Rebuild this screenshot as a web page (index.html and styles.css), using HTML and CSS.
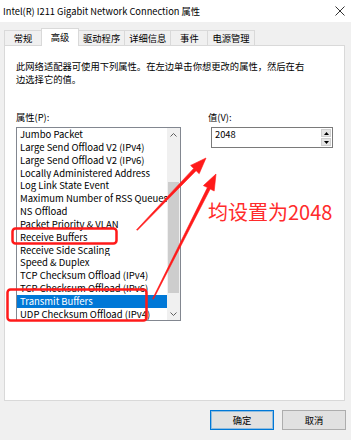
FILE: index.html
```html
<!DOCTYPE html>
<html lang="zh-CN">
<head>
    <meta charset="UTF-8">
    <meta name="viewport" content="width=device-width, initial-scale=1.0">
    <title>Intel(R) I211 Gigabit Network Connection 属性</title>
    <link rel="stylesheet" href="styles.css">
</head>
<body>
    <div class="window">
        <div class="titlebar">
            <span class="title">Intel(R) I211 Gigabit Network Connection 属性</span>
            <svg class="close" width="10" height="10" viewBox="0 0 10 10">
                <path d="M0.5 0.5L9.5 9.5M9.5 0.5L0.5 9.5" stroke="#333" stroke-width="1" fill="none"/>
            </svg>
        </div>

        <div class="tabs">
            <div class="tab">常规</div>
            <div class="tab active">高级</div>
            <div class="tab">驱动程序</div>
            <div class="tab">详细信息</div>
            <div class="tab">事件</div>
            <div class="tab">电源管理</div>
        </div>

        <div class="panel">
            <p class="desc">此网络适配器可使用下列属性。在左边单击你想更改的属性，然后在右<br>边选择它的值。</p>

            <div class="columns">
                <div class="col">
                    <div class="label">属性(P):</div>
                    <div class="listbox">
                        <ul class="items">
                            <li>Jumbo Packet</li>
                            <li>Large Send Offload V2 (IPv4)</li>
                            <li>Large Send Offload V2 (IPv6)</li>
                            <li>Locally Administered Address</li>
                            <li>Log Link State Event</li>
                            <li>Maximum Number of RSS Queues</li>
                            <li>NS Offload</li>
                            <li>Packet Priority &amp; VLAN</li>
                            <li>Receive Buffers</li>
                            <li>Receive Side Scaling</li>
                            <li>Speed &amp; Duplex</li>
                            <li>TCP Checksum Offload (IPv4)</li>
                            <li>TCP Checksum Offload (IPv6)</li>
                            <li class="selected">Transmit Buffers</li>
                            <li>UDP Checksum Offload (IPv4)</li>
                        </ul>
                        <div class="scrollbar">
                            <div class="sb-btn">
                                <svg width="7" height="4" viewBox="0 0 7 4"><path d="M0.5 3.5L3.5 0.5L6.5 3.5" stroke="#606060" fill="none"/></svg>
                            </div>
                            <div class="sb-track"><div class="sb-thumb"></div></div>
                            <div class="sb-btn">
                                <svg width="7" height="4" viewBox="0 0 7 4"><path d="M0.5 0.5L3.5 3.5L6.5 0.5" stroke="#606060" fill="none"/></svg>
                            </div>
                        </div>
                    </div>
                </div>

                <div class="col">
                    <div class="label">值(V):</div>
                    <div class="field">
                        <span class="field-value">2048</span>
                        <div class="spin">
                            <div class="spin-btn">
                                <svg width="5" height="3" viewBox="0 0 5 3"><path d="M0 3L2.5 0L5 3Z" fill="#000"/></svg>
                            </div>
                            <div class="spin-btn">
                                <svg width="5" height="3" viewBox="0 0 5 3"><path d="M0 0L2.5 3L5 0Z" fill="#000"/></svg>
                            </div>
                        </div>
                    </div>
                </div>
            </div>
        </div>

        <div class="footer">
            <button class="btn default">确定</button>
            <button class="btn">取消</button>
        </div>

        <!-- red annotations drawn over the dialog -->
        <svg class="marks" width="351" height="440" viewBox="0 0 351 440">
            <rect x="12.5" y="228.5" width="104" height="15" rx="3" fill="none" stroke="#ff1a1a" stroke-width="2.5"/>
            <rect x="7.5" y="289.5" width="139" height="31" rx="3" fill="none" stroke="#ff1a1a" stroke-width="2.5"/>
            <polygon points="137.4,230.3 196.1,170.7 199.2,173.7 206,158 190.6,165.4 193.7,168.4 136.6,229.7" fill="#ff1a1a" stroke="#ff1a1a" stroke-width="0.6"/>
            <polygon points="153.4,299.2 210.2,189 214.2,191 216,174 203.4,185.6 207.4,187.6 152.6,298.8" fill="#ff1a1a" stroke="#ff1a1a" stroke-width="0.6"/>
        </svg>
        <div class="note">均设置为2048</div>
    </div>
</body>
</html>
```

FILE: styles.css
```css
* {
    box-sizing: border-box;
}

html, body {
    margin: 0;
    padding: 0;
}

body {
    width: 351px;
    height: 440px;
    overflow: hidden;
    background-color: #f0f0f0;
    font-family: "Noto Sans CJK SC", "Noto Sans", sans-serif;
    font-size: 9.3px;
    color: #000;
}

.window {
    position: relative;
    height: 440px;
}

.titlebar {
    height: 22px;
    background-color: #fff;
    display: flex;
    align-items: center;
    justify-content: space-between;
    padding: 0 6px 0 3px;
}

.title {
    line-height: 12px;
}

.tabs {
    position: relative;
    z-index: 1;
    height: 23px;
    display: flex;
    align-items: flex-end;
    padding-left: 4px;
}

.tab {
    height: 15px;
    min-width: 38px;
    padding: 0 4px;
    margin-right: -1px;
    line-height: 14px;
    text-align: center;
    background-color: #f0f0f0;
    border: 1px solid #d9d9d9;
    border-bottom: none;
}

.tab.active {
    height: 18px;
    margin-bottom: -1px;
    line-height: 16px;
    background-color: #fff;
}

.panel {
    height: 356px;
    margin: 0 6px 0 4px;
    padding: 13.5px 11px 0;
    background-color: #fff;
    border: 1px solid #d9d9d9;
}

.desc {
    margin: 0;
    line-height: 13.5px;
}

.columns {
    display: grid;
    grid-template-columns: 165px 125px;
    column-gap: 27px;
    margin-top: 24.5px;
}

.label {
    line-height: 12px;
    margin-bottom: 4px;
}

.listbox {
    display: flex;
    height: 194px;
    border: 1px solid #828790;
}

.items {
    flex: 1;
    min-width: 0;
    margin: 0;
    padding: 0;
    list-style: none;
    overflow: hidden;
    font-size: 9.5px;
}

.items li {
    line-height: 12.85px;
    padding-left: 3px;
    white-space: nowrap;
    overflow: hidden;
}

.items li.selected {
    background-color: #0078d7;
    color: #fff;
}

.scrollbar {
    width: 13px;
    display: flex;
    flex-direction: column;
    background-color: #f0f0f0;
}

.sb-btn {
    height: 13px;
    display: flex;
    align-items: center;
    justify-content: center;
}

.sb-track {
    flex: 1;
}

.sb-thumb {
    height: 111px;
    margin: 41px 1px 0;
    background-color: #cdcdcd;
}

.field {
    height: 21px;
    margin-left: 3px;
    display: flex;
    background-color: #fff;
    border: 1px solid #7a7a7a;
}

.field-value {
    flex: 1;
    padding-left: 3px;
    line-height: 13px;
}

.spin {
    width: 12px;
    display: flex;
    flex-direction: column;
    gap: 1px;
    padding: 1px;
}

.spin-btn {
    flex: 1;
    display: flex;
    align-items: center;
    justify-content: center;
    background-color: #e5e5e5;
    border: 1px solid #cfcfcf;
}

.footer {
    display: flex;
    justify-content: flex-end;
    gap: 8px;
    padding: 9px 5px 0 0;
}

.btn {
    width: 64px;
    height: 20px;
    padding: 0;
    font: inherit;
    color: #000;
    background-color: #e1e1e1;
    border: 1px solid #adadad;
}

.btn.default {
    border-color: #0078d7;
    box-shadow: inset 0 0 0 1px rgba(0, 120, 215, 0.35);
}

.marks {
    position: absolute;
    top: 0;
    left: 0;
    pointer-events: none;
}

.note {
    position: absolute;
    left: 208px;
    top: 200px;
    font-size: 20px;
    line-height: 24px;
    color: #ff2b2b;
    white-space: nowrap;
}
```
